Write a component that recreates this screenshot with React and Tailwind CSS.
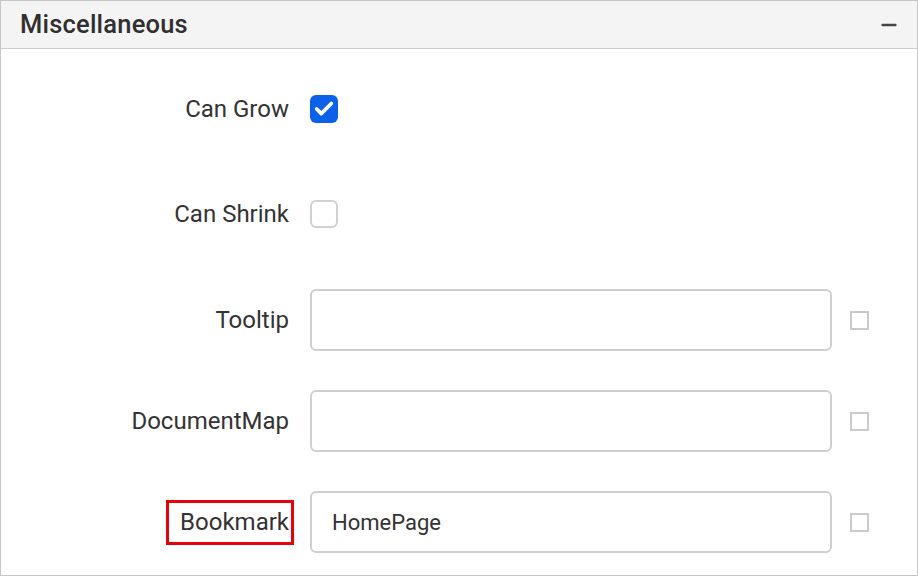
import { Check, Minus } from "lucide-react";

function Label({ children, boxed }) {
  return (
    <div className="w-[288px] flex justify-end shrink-0">
      {boxed ? (
        <span className="border-[3px] border-[#e8000b] pl-[11px] pr-[2px] py-[5px] -mr-[5px] leading-[29px]">
          {children}
        </span>
      ) : (
        <span>{children}</span>
      )}
    </div>
  );
}

function TextRow({ label, value, boxed, className }) {
  return (
    <div className={`flex items-center h-[62px] ${className || ""}`}>
      <Label boxed={boxed}>{label}</Label>
      <div className="ml-[21px] w-[522px] h-[62px] border-2 border-[#cfcfcf] rounded-[6px] bg-white flex items-center px-[20px] text-[22px] text-[#333]">
        {value}
      </div>
      <div className="ml-[18px] w-[19px] h-[19px] border-2 border-[#cacaca]" />
    </div>
  );
}

function App() {
  return (
    <div
      className="w-[918px] h-[576px] border border-[#c6c6c6] bg-white flex flex-col text-[#333] text-[24px]"
      style={{ fontFamily: "Roboto, 'Liberation Sans', sans-serif" }}
    >
      {/* Header */}
      <div className="h-[48px] bg-[#f4f4f4] border-b border-[#cdcdcd] flex items-center justify-between pl-[19px] pr-[17px] shrink-0">
        <span className="text-[25.5px] font-medium text-[#2f2f2f] tracking-[0.2px]">Miscellaneous</span>
        <Minus size={22} strokeWidth={2.6} className="text-[#444]" />
      </div>

      {/* Body */}
      <div className="flex flex-col pt-[29px]">
        <div className="flex items-center h-[62px]">
          <Label>Can Grow</Label>
          <div className="ml-[21px] w-[28px] h-[28px] rounded-[6px] bg-[#0b61e8] flex items-center justify-center">
            <Check size={22} strokeWidth={4} className="text-white" />
          </div>
        </div>
        <div className="flex items-center h-[62px] mt-[43px]">
          <Label>Can Shrink</Label>
          <div className="ml-[21px] w-[28px] h-[28px] rounded-[6px] border-2 border-[#d0d0d0] bg-white" />
        </div>
        <TextRow label="Tooltip" value="" className="mt-[44px]" />
        <TextRow label="DocumentMap" value="" className="mt-[39px]" />
        <TextRow label="Bookmark" value="HomePage" boxed className="mt-[39px]" />
      </div>
    </div>
  );
}

export default App;
